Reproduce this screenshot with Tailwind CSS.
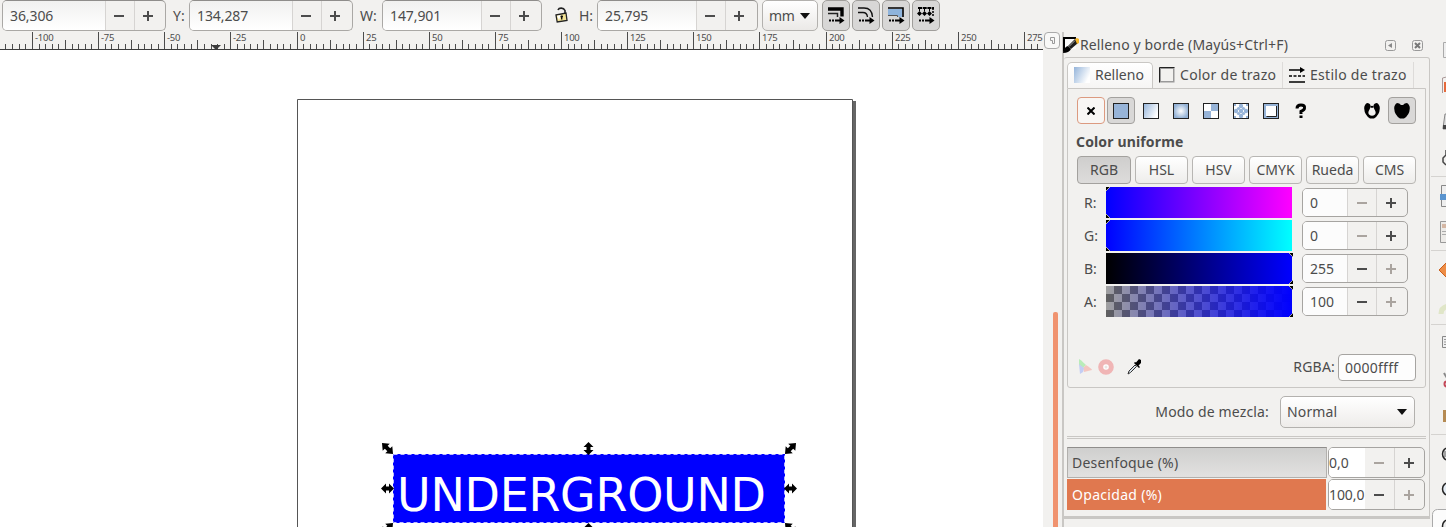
<!DOCTYPE html>
<html lang="es"><head><meta charset="utf-8"><title>Inkscape</title>
<script src="https://cdn.jsdelivr.net/npm/@tailwindcss/browser@4"></script></head>
<body class="w-[1446px] h-[527px] overflow-hidden bg-[#f2f1ef] font-['Noto_Sans',sans-serif] text-[14px] leading-5 text-[#4c4c4c]">
<svg class="absolute size-0">
 <symbol id="plus" viewBox="0 0 12 12"><path d="M0 6h10M5 1v10" stroke="currentColor" stroke-width="2"/></symbol>
 <symbol id="minus" viewBox="0 0 12 12"><path d="M0 6h10" stroke="currentColor" stroke-width="2"/></symbol>
 <symbol id="arr" viewBox="0 0 18 7"><path d="M1 3.500h2M4 3.500h2M7 3.500h5" stroke="#000" stroke-width="2"/><path d="M11.500 0l5 3.500l-5 3.500z" fill="#000"/></symbol>
 <linearGradient id="sky" x1="0" y1="0" x2="1" y2="0.5"><stop stop-color="#94b4da"/><stop offset="1" stop-color="#fff"/></linearGradient>
 <radialGradient id="rad"><stop stop-color="#fff"/><stop offset="1" stop-color="#94b2d6"/></radialGradient>
</svg>
<div class="flex flex-col h-[527px]">
<!-- tool controls -->
<header class="flex h-8 shrink-0 items-start pl-0.5">
 <div class="flex w-[164px] h-[31px] rounded-[5px] border border-[#aaa8a5] border-t-[#8f8d8b] overflow-hidden">
  <span class="w-[102px] pl-[7px] pt-[5px] bg-gradient-to-b from-[#f1f1f0] to-white tracking-[-0.1px]">36,306</span>
  <span class="flex w-[29px] border-l border-[#d6d4d2] items-center justify-center"><svg class="size-3"><use href="#minus"/></svg></span>
  <span class="flex flex-1 border-l border-[#d6d4d2] items-center justify-center pr-0.5"><svg class="size-3"><use href="#plus"/></svg></span>
 </div>
 <span class="w-[23px] pl-[7px] pt-[6px]">Y:</span>
 <div class="flex w-[164px] h-[31px] rounded-[5px] border border-[#aaa8a5] border-t-[#8f8d8b] overflow-hidden">
  <span class="w-[102px] pl-[7px] pt-[5px] bg-gradient-to-b from-[#f1f1f0] to-white tracking-[-0.1px]">134,287</span>
  <span class="flex w-[29px] border-l border-[#d6d4d2] items-center justify-center"><svg class="size-3"><use href="#minus"/></svg></span>
  <span class="flex flex-1 border-l border-[#d6d4d2] items-center justify-center pr-0.5"><svg class="size-3"><use href="#plus"/></svg></span>
 </div>
 <span class="w-[29px] pl-[7px] pt-[6px]">W:</span>
 <div class="flex w-[160px] h-[31px] rounded-[5px] border border-[#aaa8a5] border-t-[#8f8d8b] overflow-hidden">
  <span class="w-[98px] pl-[7px] pt-[5px] bg-gradient-to-b from-[#f1f1f0] to-white tracking-[-0.1px]">147,901</span>
  <span class="flex w-[29px] border-l border-[#d6d4d2] items-center justify-center"><svg class="size-3"><use href="#minus"/></svg></span>
  <span class="flex flex-1 border-l border-[#d6d4d2] items-center justify-center pr-0.5"><svg class="size-3"><use href="#plus"/></svg></span>
 </div>
 <svg class="w-4 h-4 ml-[12px] mt-[7px]" viewBox="0 0 16 16"><path d="M4 3C5 .5 9.500 .3 11 3.500V7" fill="none" stroke="#222" stroke-width="1.600"/><path d="M2 8l10-2l1 7.500l-9.800 1.500z" fill="#f3e394" stroke="#222" stroke-width="1.300"/><path d="M3 8.700l4-.8l-2 5z" fill="#fff"/><path d="M7.700 8.500v4M6.500 9.500h2.500" stroke="#111" stroke-width="1.400"/></svg>
 <span class="w-[27px] pl-[9px] pt-[6px]">H:</span>
 <div class="flex w-[161px] h-[31px] rounded-[5px] border border-[#aaa8a5] border-t-[#8f8d8b] overflow-hidden">
  <span class="w-[98px] pl-[7px] pt-[5px] bg-gradient-to-b from-[#f1f1f0] to-white tracking-[-0.1px]">25,795</span>
  <span class="flex w-[29px] border-l border-[#d6d4d2] items-center justify-center"><svg class="size-3"><use href="#minus"/></svg></span>
  <span class="flex flex-1 border-l border-[#d6d4d2] items-center justify-center pr-[3px]"><svg class="size-3"><use href="#plus"/></svg></span>
 </div>
 <div class="flex w-[56px] h-[31px] ml-1 rounded-[5px] border border-[#b3b1ae] bg-gradient-to-b from-white to-[#ebe9e7] items-center pl-[6px] gap-[6px]"><span class="tracking-[-0.4px]">mm</span><svg class="w-[10px] h-[6px]" viewBox="0 0 10 6"><path d="M0 0h10l-5 6z" fill="#111"/></svg></div>
 <div class="flex gap-0.5 ml-1">
  <div class="w-7 h-[31px] rounded-[5px] border border-[#a09e9b] bg-[#d8d7d6] pt-[6px] pl-1"><svg class="w-[18px] h-[17px]"><path d="M1 2h14V9.500" fill="none" stroke="#000" stroke-width="3.400"/><path d="M1 6.500h9.500V10" fill="none" stroke="#222" stroke-width="1.500"/><use href="#arr" x="1" y="10" width="18" height="7"/></svg></div>
  <div class="w-7 h-[31px] rounded-[5px] border border-[#a09e9b] bg-[#d8d7d6] pt-[6px] pl-1"><svg class="w-[18px] h-[17px]"><path d="M1 1h6q8 0 8.500 9M1 5.500h5q4 0 4.500 4.500" fill="none" stroke="#111" stroke-width="1.300"/><use href="#arr" x="1" y="10" width="18" height="7"/></svg></div>
  <div class="w-7 h-[31px] rounded-[5px] border border-[#a09e9b] bg-[#d8d7d6] pt-[6px] pl-1"><svg class="w-[18px] h-[17px]"><path d="M1 2h14v8h-4V8H1z" fill="#8fb4dc"/><path d="M1 1h15V10" fill="none" stroke="#000" stroke-width="1.600"/><path d="M1 8.500h9.500V10" fill="none" stroke="#555" stroke-width="1"/><use href="#arr" x="1" y="10" width="18" height="7"/></svg></div>
  <div class="w-7 h-[31px] rounded-[5px] border border-[#a09e9b] bg-[#d8d7d6] pt-[6px] pl-1"><svg class="w-[18px] h-[17px]"><path d="M1 1h16" stroke="#000" stroke-width="2" stroke-dasharray="4 .7"/><path d="M16 1v8" stroke="#000" stroke-width="1.500" stroke-dasharray="2 1"/><path d="M0 6.500L2.500 4 5 6.500 2.500 9zM5 6.500L7.500 4 10 6.500 7.500 9zM10 6.500L12.500 4 15 6.500 12.500 9zM2 2h1v2H2zM7 2h1v2H7zM12 2h1v2h-1z"/><use href="#arr" x="1" y="10" width="18" height="7"/></svg></div>
 </div>
</header>
<div class="flex flex-1 min-h-0">
 <!-- drawing area -->
 <main class="flex flex-col w-[1043px] shrink-0">
  <svg id="ruler" class="w-full h-[18px] shrink-0 font-['Noto_Sans',sans-serif] text-[9.5px] tracking-[-0.25px]"></svg>
  <svg class="w-full flex-1 bg-white" viewBox="0 50 1043 477">
   <path d="M853 101h3v430h-3z" fill="#666"/><path d="M297.500 540V99.500h555V540" fill="#fff" stroke="#555"/>
   <path d="M393 454h392v69H393z" fill="#00f"/><path d="M393.500 454.500h391v68h-391z" fill="none" stroke="#bbf" stroke-dasharray="4 3"/>
   <text x="397" y="511" fill="#fff" font-family="DejaVu Sans" font-size="46" textLength="369">UNDERGROUND</text>
   <defs><path id="dbl" d="M-6.500 0L-1.500-5v3h3v-3L6.500 0L1.500 5v-3h-3v3z"/></defs>
   <use href="#dbl" transform="translate(387.500 488.500)"/><use href="#dbl" transform="translate(790.500 488.500)"/>
   <use href="#dbl" transform="translate(588.500 448.500) rotate(90)"/><use href="#dbl" transform="translate(588.500 529.500) rotate(90)"/>
   <use href="#dbl" transform="translate(387.500 448.500) rotate(45) scale(1.200 1)"/><use href="#dbl" transform="translate(790.500 448.500) rotate(-45) scale(1.200 1)"/>
   <use href="#dbl" transform="translate(387.500 528.500) rotate(-45) scale(1.200 1)"/><use href="#dbl" transform="translate(790.500 528.500) rotate(45) scale(1.200 1)"/>
  </svg>
 </main>
 <div class="flex flex-col w-[19px] shrink-0 items-start">
  <div class="w-4 h-[17px] ml-px rounded-[4px] border border-[#aaa] bg-[#f8f8f7] flex items-center justify-center"><svg class="w-[7px] h-[9px]" viewBox="0 0 7 9"><path d="M1.500 1.500h4v6h-2v-3h-2z" fill="none" stroke="#999"/></svg></div>
  <div class="w-[5px] ml-[10px] mt-[263px] flex-1 rounded-t-[2px] bg-[#f0936f]"></div>
 </div>
 <!-- fill and stroke dialog -->
 <aside class="flex flex-col w-[368px] shrink-0 border-l-2 border-[#c9c7c4]">
  <div class="flex h-[25px] items-center shrink-0 pr-[7px]">
   <svg class="size-4 -ml-px" viewBox="0 0 16 16"><path d="M0 0h13v2H2v10l-2 4z"/><path d="M2 2h11v10H2z" fill="#fafafa"/><path d="M0 16q1-6 5-7l3 3q-2 4-8 4z"/><path d="M5 9l7-7 3 1v3l-7 6z" fill="#1c1c1c"/><path d="M12 2l2-1 2 1v4l-2 1z" fill="#f2b52c"/><path d="M6 9.500l6-6" stroke="#aaa"/></svg>
   <span class="tracking-[0.13px] ml-px whitespace-nowrap">Relleno y borde (Mayús+Ctrl+F)</span>
   <span class="ml-auto flex gap-4 pt-0.5"><svg class="size-[11px]" viewBox="0 0 11 11"><rect x=".5" y=".5" width="10" height="10" rx="2" fill="none" stroke="#999"/><path d="M3 5.500l4-2.500v5z" fill="#888"/></svg><svg class="size-[11px]" viewBox="0 0 11 11"><rect x=".5" y=".5" width="10" height="10" rx="2" fill="none" stroke="#999"/><path d="M3 3l5 5M8 3l-5 5" stroke="#777" stroke-width="2"/></svg></span>
  </div>
  <div class="flex flex-col h-[462px] border-t border-r border-b-[3px] border-[#c9c7c4] rounded-t-[3px] pt-1 pl-[3px] pr-[3px]">
   <div class="flex h-[26px] shrink-0">
    <div class="flex w-[86px] items-center border border-b-0 border-[#c9c7c4] rounded-t-[5px] bg-gradient-to-b from-white to-[#f6f5f4] pl-[6px] pb-px gap-[5px]"><svg class="size-4"><rect width="16" height="16" fill="url(#sky)"/></svg><span>Relleno</span></div>
    <div class="flex w-[130px] items-center border-r border-[#dddbd9] pl-[6px] gap-[5px]"><svg class="size-4"><rect x=".5" y=".5" width="15" height="15" fill="#999"/><rect x="2" y="2" width="12" height="12" fill="#f2f1ef"/><path d="M.5 15.500v-15h15" fill="none" stroke="#222"/></svg><span class="whitespace-nowrap tracking-[0.28px]">Color de trazo</span></div>
    <div class="flex w-[131px] items-center border-r border-[#dddbd9] pl-[6px] gap-[5px]"><svg class="size-4"><path d="M0 3h12M0 15h16" stroke="#000" stroke-width="1.600"/><path d="M11 0l5 3l-5 3z"/><path d="M0 9h16" stroke="#000" stroke-width="1.600" stroke-dasharray="3 1.500"/></svg><span class="whitespace-nowrap tracking-[0.28px]">Estilo de trazo</span></div>
   </div>
   <div class="flex flex-col w-[359px] h-[300px] shrink-0 border border-[#c9c7c4] rounded-b-[3px] pl-[9px] pt-[9px]">
    <div class="flex w-[339px] h-[27px] -mt-px shrink-0 items-center">
     <div class="flex w-7 h-[27px] items-center justify-center rounded-[4px] border border-[#dc9a80] bg-[#f8f6f4]"><svg class="size-2"><path d="M.5 .5l7 7M7.500 .5l-7 7" stroke="#000" stroke-width="2"/></svg></div>
     <div class="flex w-7 h-[27px] ml-0.5 items-center justify-center rounded-[4px] border border-[#a3a19e] bg-[#d9d8d7]"><svg class="size-4"><rect x=".5" y=".5" width="15" height="15" fill="#97b4d8" stroke="#222"/></svg></div>
     <div class="flex gap-[14px] ml-2">
      <svg class="size-4"><rect x=".5" y=".5" width="15" height="15" fill="url(#sky)" stroke="#222"/></svg>
      <svg class="size-4"><rect x=".5" y=".5" width="15" height="15" fill="url(#rad)" stroke="#222"/></svg>
      <svg class="size-4"><rect x=".5" y=".5" width="15" height="15" fill="#fff" stroke="#222"/><path d="M1 8h7v7H1zM8 1h7v7H8z" fill="#97b4d8"/></svg>
      <svg class="size-4"><rect x=".5" y=".5" width="15" height="15" fill="#fff" stroke="#222"/><g fill="#97b4d8"><circle cx="8" cy="3" r="2.200"/><circle cx="3" cy="8" r="2.200"/><circle cx="13" cy="8" r="2.200"/><circle cx="8" cy="13" r="2.200"/><circle cx="8" cy="8" r="2.200"/><circle cx="5.500" cy="5.500" r="1.600"/><circle cx="10.500" cy="5.500" r="1.600"/><circle cx="5.500" cy="10.500" r="1.600"/><circle cx="10.500" cy="10.500" r="1.600"/><path d="M1 1h2v2H1zM13 1h2v2h-2zM1 13h2v2H1zM13 13h2v2h-2z"/></g></svg>
      <svg class="size-4"><rect x=".5" y=".5" width="15" height="15" fill="#97b4d8" stroke="#222"/><path d="M3 3h10v10H3z" fill="#fff"/><path d="M3.500 13.500h10V3" fill="none" stroke="#222"/></svg>
      <svg class="size-4"><path d="M4 5.500Q4 2 8 2t3.500 3Q11.500 7 8 8.500V11" fill="none" stroke="#000" stroke-width="3"/><path d="M6.500 12.500h3V15h-3z"/></svg>
     </div>
     <svg class="size-4 ml-auto mr-2" viewBox="0 0 16 16"><path d="M3 0Q6 0 6.500 2.500Q7 4 5.500 6.500Q3.500 9.500 5 11.500Q8 14 11 11.500Q12.500 9.500 10.500 6.500Q9 4 9.500 2.500Q10 0 13 0Q16 2 15.800 5.500Q15.500 12 10 15.500H6Q.5 12 .2 5.500Q0 2 3 0z"/><path d="M6.300 3.200Q8 2.200 9.700 3.200L9 5Q8 4 7 5z"/></svg>
     <div class="flex w-7 h-[27px] items-center justify-center rounded-[4px] border border-[#a3a19e] bg-[#d9d8d7]"><svg class="size-4" viewBox="0 0 16 16"><path d="M3 0q2.500 0 4 2h2Q10.500 0 13 0q3 2 2.800 5.500Q15.500 12 10 15.500H6Q.5 12 .2 5.500 0 2 3 0z"/></svg></div>
    </div>
    <b class="mt-2 -ml-px tracking-[0.15px]">Color uniforme</b>
    <div class="flex gap-1 w-[339px] h-7 mt-1 shrink-0 text-center">
     <span class="w-[54px] rounded-[4px] border border-[#a3a19e] bg-gradient-to-b from-[#cfcecd] to-[#dddcdb] pt-[3px]">RGB</span>
     <span class="flex-1 rounded-[4px] border border-[#b8b6b3] bg-gradient-to-b from-white to-[#eeedeb] pt-[3px]">HSL</span>
     <span class="flex-1 rounded-[4px] border border-[#b8b6b3] bg-gradient-to-b from-white to-[#eeedeb] pt-[3px]">HSV</span>
     <span class="flex-1 rounded-[4px] border border-[#b8b6b3] bg-gradient-to-b from-white to-[#eeedeb] pt-[3px]">CMYK</span>
     <span class="flex-1 rounded-[4px] border border-[#b8b6b3] bg-gradient-to-b from-white to-[#eeedeb] pt-[3px]">Rueda</span>
     <span class="flex-1 rounded-[4px] border border-[#b8b6b3] bg-gradient-to-b from-white to-[#eeedeb] pt-[3px]">CMS</span>
    </div>
    <div class="flex flex-col gap-0.5 mt-[3px] pl-[7px]">
     <div class="flex h-[31px] items-center"><span class="w-[22px]">R:</span><svg class="w-[187px] h-[31px]"><foreignObject width="186" height="31"><div class="h-[31px] bg-linear-to-r/srgb from-[#00f] to-[#f0f]"></div></foreignObject><path d="M0 0h4l-4 4zM0 31h4l-4-4z"/><path d="M0 4l4-4M0 27l4 4" stroke="#aaa"/></svg>
      <div class="flex w-[106px] h-[29px] ml-[9px] rounded-[5px] border border-[#a6a4a1] overflow-hidden"><span class="w-11 pl-[7px] pt-[4px] bg-[#fcfcfc]">0</span><span class="flex w-[29px] border-l border-[#d6d4d2] items-center justify-center text-[#aaa49f]"><svg class="size-3 ml-px"><use href="#minus"/></svg></span><span class="flex flex-1 border-l border-[#d6d4d2] items-center justify-center"><svg class="size-3"><use href="#plus"/></svg></span></div></div>
     <div class="flex h-[31px] items-center"><span class="w-[22px]">G:</span><svg class="w-[187px] h-[31px]"><foreignObject width="186" height="31"><div class="h-[31px] bg-linear-to-r/srgb from-[#00f] to-[#0ff]"></div></foreignObject><path d="M0 0h4l-4 4zM0 31h4l-4-4z"/><path d="M0 4l4-4M0 27l4 4" stroke="#aaa"/></svg>
      <div class="flex w-[106px] h-[29px] ml-[9px] rounded-[5px] border border-[#a6a4a1] overflow-hidden"><span class="w-11 pl-[7px] pt-[4px] bg-[#fcfcfc]">0</span><span class="flex w-[29px] border-l border-[#d6d4d2] items-center justify-center text-[#aaa49f]"><svg class="size-3 ml-px"><use href="#minus"/></svg></span><span class="flex flex-1 border-l border-[#d6d4d2] items-center justify-center"><svg class="size-3"><use href="#plus"/></svg></span></div></div>
     <div class="flex h-[31px] items-center"><span class="w-[22px]">B:</span><svg class="w-[187px] h-[31px]"><foreignObject width="186" height="31"><div class="h-[31px] bg-linear-to-r/srgb from-black to-[#00f]"></div></foreignObject><path d="M187 0h-4l4 4zM187 31h-4l4-4z"/><path d="M187 4l-4-4M187 27l-4 4" stroke="#aaa"/></svg>
      <div class="flex w-[106px] h-[29px] ml-[9px] rounded-[5px] border border-[#a6a4a1] overflow-hidden"><span class="w-11 pl-[7px] pt-[4px] bg-[#fcfcfc]">255</span><span class="flex w-[29px] border-l border-[#d6d4d2] items-center justify-center"><svg class="size-3 ml-px"><use href="#minus"/></svg></span><span class="flex flex-1 border-l border-[#d6d4d2] items-center justify-center text-[#aaa49f]"><svg class="size-3"><use href="#plus"/></svg></span></div></div>
     <div class="flex h-[31px] items-center"><span class="w-[22px]">A:</span><svg class="w-[187px] h-[31px]"><defs><pattern id="chk" width="16" height="16" patternUnits="userSpaceOnUse"><path d="M0 0h16v16H0z" fill="#606060"/><path d="M0 0h8v8H0zM8 8h8v8H8z" fill="#a0a0a0"/></pattern><linearGradient id="al"><stop stop-color="#00f" stop-opacity="0"/><stop offset="1" stop-color="#00f"/></linearGradient></defs><rect width="186" height="31" fill="url(#chk)"/><rect width="186" height="31" fill="url(#al)"/><path d="M187 0h-4l4 4zM187 31h-4l4-4z"/><path d="M187 4l-4-4M187 27l-4 4" stroke="#aaa"/></svg>
      <div class="flex w-[106px] h-[29px] ml-[9px] rounded-[5px] border border-[#a6a4a1] overflow-hidden"><span class="w-11 pl-[7px] pt-[4px] bg-[#fcfcfc]">100</span><span class="flex w-[29px] border-l border-[#d6d4d2] items-center justify-center"><svg class="size-3 ml-px"><use href="#minus"/></svg></span><span class="flex flex-1 border-l border-[#d6d4d2] items-center justify-center text-[#aaa49f]"><svg class="size-3"><use href="#plus"/></svg></span></div></div>
    </div>
    <div class="flex w-[339px] h-7 mt-9 items-center">
     <svg class="size-4" viewBox="0 0 16 16"><path d="M2 0Q3 0 9 6L6 9 2 6z" fill="#b9ecb9"/><path d="M9 6q6 4 6 5l-8 2-1-4z" fill="#f3c6c0"/><path d="M2 5l5 4-1 4-3 2z" fill="#c3cdf4"/></svg>
     <svg class="size-4 ml-[5px]" viewBox="0 0 16 16"><circle cx="8" cy="8" r="5.300" fill="#fff" stroke="#f0b5b5" stroke-width="5"/><circle cx="8" cy="8" r="1.500" fill="#e9e5e3"/></svg>
     <svg class="size-4 ml-3" viewBox="0 0 16 16"><path d="M2 15l1-3 6-6 1.500 1.500-6 6z" fill="#d7e0e8" stroke="#333"/><path d="M8 4l5 5 1-1-1.500-1.500L15 4V1l-2-1-3 3.500L9 3z"/></svg>
     <span class="ml-auto mr-[3px] tracking-[0.2px]">RGBA:</span>
     <span class="w-[78px] h-[27px] rounded-[4px] border border-[#a6a4a1] bg-[#fdfdfd] pl-[6px] pt-[3px] tracking-[0.25px]">0000ffff</span>
    </div>
   </div>
   <div class="flex h-8 mt-2 items-center justify-end pr-[11px] shrink-0"><span class="mr-[11px] tracking-[0.15px]">Modo de mezcla:</span>
    <span class="flex w-[135px] h-8 rounded-[5px] border border-[#b3b1ae] bg-gradient-to-b from-white to-[#eeecea] items-center pl-[6px] pr-[7px] justify-between tracking-[0.15px]">Normal<svg class="w-[10px] h-[6px]" viewBox="0 0 10 6"><path d="M0 0h10l-5 6z" fill="#111"/></svg></span></div>
   <div class="h-[3px] mt-2 border-y border-[#c9c7c4] shrink-0"></div>
   <div class="flex h-[31px] mt-2 shrink-0"><div class="w-[260px] mr-px border border-[#b2b0ad] border-t-[#8f8d8b] bg-gradient-to-b from-[#cfcfce] to-[#e2e1e0] pl-1 pt-[5px] tracking-[0.2px]">Desenfoque (%)</div>
    <div class="flex w-[97px] rounded-[5px] border border-[#a6a4a1] overflow-hidden"><span class="w-9 pt-[5px] bg-white">0,0</span><span class="flex w-[29px] items-center justify-center text-[#aaa49f]"><svg class="size-3 ml-px"><use href="#minus"/></svg></span><span class="flex flex-1 border-l border-[#d6d4d2] items-center justify-center"><svg class="size-3"><use href="#plus"/></svg></span></div></div>
   <div class="flex h-[31px] mt-px shrink-0"><div class="w-[259px] mr-0.5 bg-[#e0784f] text-white pl-[5px] pt-[6px] tracking-[0.3px]">Opacidad (%)</div>
    <div class="flex w-[97px] rounded-[5px] border border-[#a6a4a1] overflow-hidden"><span class="w-9 pt-[5px] bg-white tracking-[-0.1px]">100,0</span><span class="flex w-[29px] items-center justify-center"><svg class="size-3 ml-px"><use href="#minus"/></svg></span><span class="flex flex-1 border-l border-[#d6d4d2] items-center justify-center text-[#aaa49f]"><svg class="size-3"><use href="#plus"/></svg></span></div></div>
  </div>
 </aside>
 <!-- commands bar, cut by the window edge -->
 <svg class="w-4 h-full" viewBox="1430 32 16 495">
  <path d="M1431 176.500h15M1431 250.500h15M1431 324.500h15M1431 434.500h15" stroke="#d5d3d0"/>
  <path d="M1443.500 42.500h5v15h-5z" fill="#eee" stroke="#aaa"/><path d="M1444 82h4v10h-4z" fill="#e66a3c"/><path d="M1442.500 93v-15l4-1" fill="none" stroke="#a99"/>
  <path d="M1443 128l2-14h3v15h-5z" fill="#ddd" stroke="#888"/><path d="M1443 125h4v4h-4z" fill="#444"/><path d="M1446 150v5l-3 3v4l3 3" fill="none" stroke="#444" stroke-width="1.500"/>
  <path d="M1441.500 185.500h6v21h-6z" fill="#eee" stroke="#888"/><path d="M1440 194h6v6h-6z" fill="#5a94cf"/>
  <path d="M1440.500 221.500h6v21h-6z" fill="#eceae7" stroke="#999"/><path d="M1442 224h4v4h-4z" fill="#d5b7a4"/><path d="M1442 231.500h4M1442 234.500h4" stroke="#aaa"/>
  <path d="M1439 270l9-9v18z" fill="#ee8d45" stroke="#c9601e"/><path d="M1441 314q0-7 8-8" fill="none" stroke="#e0e6c8" stroke-width="5"/>
  <path d="M1442.500 336.500h6v11h-6z" fill="#eee" stroke="#888"/><path d="M1444 339.500h3M1444 342h3M1444 344.500h3" stroke="#999"/>
  <path d="M1444 373l3 5" stroke="#888" stroke-width="2"/><circle cx="1447" cy="384" r="2.500" fill="none" stroke="#c44858" stroke-width="2"/>
  <path d="M1443 410h5v12h-5z" fill="#b58a52"/><circle cx="1449" cy="454" r="6.500" fill="#eee" stroke="#222" stroke-width="1.500"/><path d="M1444 452h2M1444 454h2M1444 456h2" stroke="#555"/><circle cx="1449" cy="489" r="6.500" fill="#e5edf4" stroke="#222" stroke-width="1.500"/>
  <rect x="1432.500" y="509.500" width="30" height="32" rx="5" fill="#fcfcfc" stroke="#aaa"/><circle cx="1449" cy="526" r="6.500" fill="#eee" stroke="#222" stroke-width="1.500"/>
 </svg>
</div></div>
<script>
 // ruler: one tick every 2.5 mm, a label every 25 mm
 let out = '<path d="M0 17h1043v1H0z" fill="#3c3c3c"/>';
 for (let i = -45; i <= 112; i++) {
  const x = Math.floor(297 + i * 6.614);
  if (x < 0 || x > 1042) continue;
  const y = i % 10 === 0 ? 0 : i % 5 === 0 ? 8 : 12;
  out += `<path d="M${x} ${y}h1V17h-1z" fill="#4c4c4c"/>`;
  if (y === 0) out += `<text x="${x + 3}" y="9" fill="#4c4c4c">${i * 2.5}</text>`;
 }
 out += '<path d="M211 13h10l-5 5z" fill="#3c3c3c"/>';
 document.getElementById('ruler').innerHTML = out;
</script>
</body></html>
